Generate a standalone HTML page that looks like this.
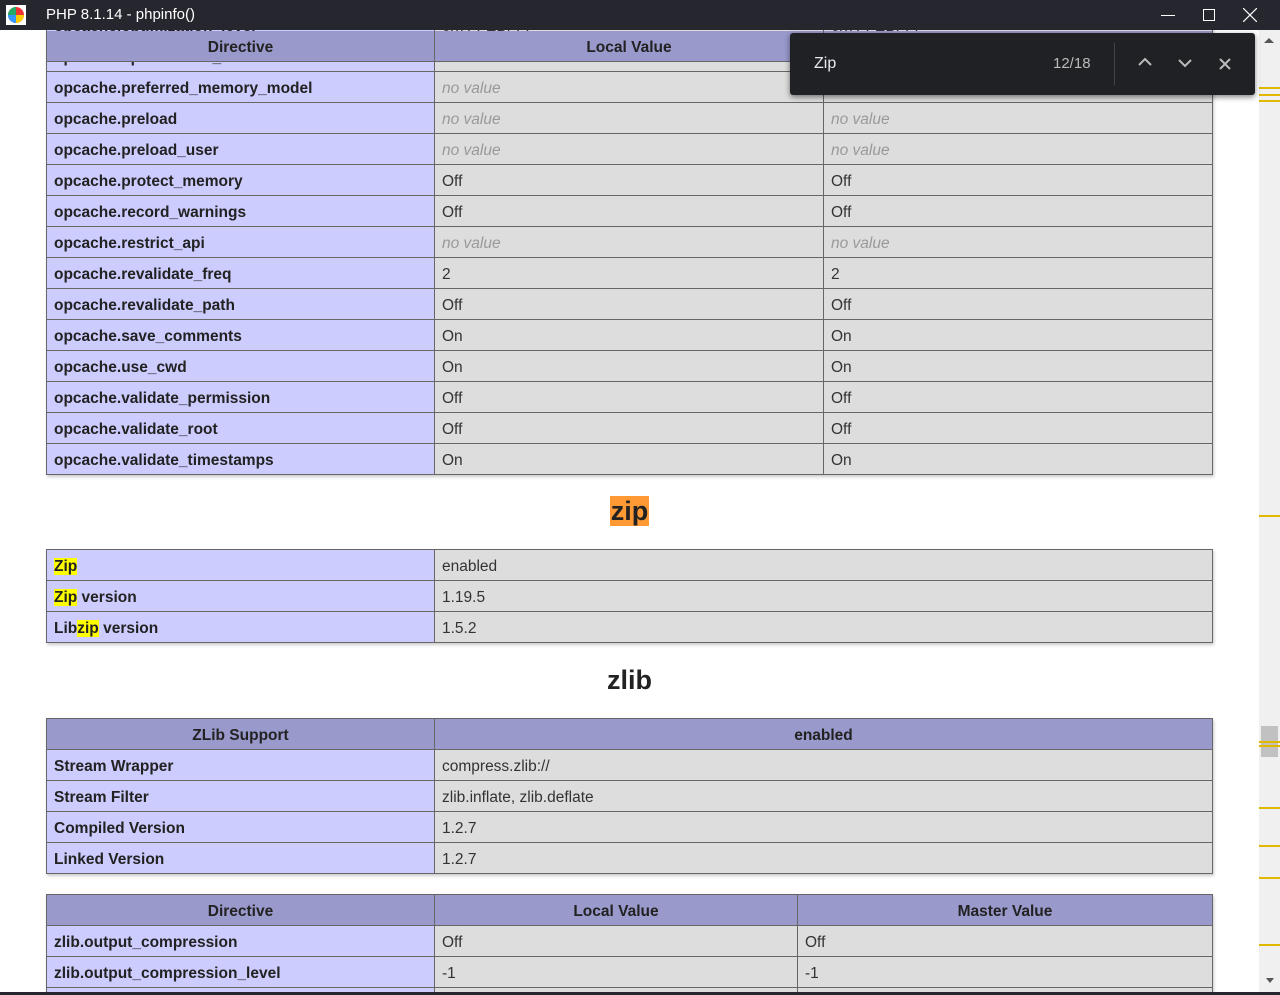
<!DOCTYPE html>
<html style="overflow:hidden;height:995px"><head><meta charset="utf-8"><style>
*{margin:0;padding:0;box-sizing:border-box}
body{width:1280px;height:995px;overflow:hidden;background:#fff;font-family:"Liberation Sans",sans-serif;color:#222}
#w{position:absolute;left:0;top:0;width:1280px;height:995px;overflow:hidden}
.tb{position:absolute;left:0;top:0;width:1280px;height:30px;background:#26262e;color:#fff;font-size:15px}
.tb .t{position:absolute;left:46px;top:6px}
table{position:absolute;left:46px;width:1167px;border-collapse:collapse;font-size:15.5px;box-shadow:1px 2px 3px #ccc}
td,th{border:1px solid #666;height:31px;padding:4px 7px 0;vertical-align:middle;white-space:nowrap}
td.e{background:#ccf;font-weight:bold;color:#222}
td.v{background:#ddd;color:#333}
th{background:#99c;font-weight:bold;text-align:center;color:#222}
i{color:#999}
.hl{background:#ff0}
h2{position:absolute;left:46px;width:1167px;text-align:center;font-size:27px;font-weight:bold;color:#222}
.sb{position:absolute;left:1259px;top:30px;width:21px;height:965px;background:#f0f0f0}
.mk{position:absolute;left:1259px;width:21px;height:2px;background:#e0b800}
.find{position:absolute;left:790px;top:33px;width:465px;height:62px;background:#202124;border-radius:3px;box-shadow:0 2px 6px rgba(0,0,0,.5);color:#e8eaed}
</style></head><body><div id="w">
<table style="top:9px">
<colgroup><col style="width:388px"><col style="width:389px"><col></colgroup>
<tr><td class="e">opcache.optimization_level</td><td class="v">0x7FFEBFFF</td><td class="v">0x7FFEBFFF</td></tr>
<tr><td class="e">opcache.optimization_level</td><td class="v">0x7FFEBFFF</td><td class="v">0x7FFEBFFF</td></tr>
<tr><td class="e">opcache.preferred_memory_model</td><td class="v"><i>no value</i></td><td class="v"><i>no value</i></td></tr>
<tr><td class="e">opcache.preload</td><td class="v"><i>no value</i></td><td class="v"><i>no value</i></td></tr>
<tr><td class="e">opcache.preload_user</td><td class="v"><i>no value</i></td><td class="v"><i>no value</i></td></tr>
<tr><td class="e">opcache.protect_memory</td><td class="v">Off</td><td class="v">Off</td></tr>
<tr><td class="e">opcache.record_warnings</td><td class="v">Off</td><td class="v">Off</td></tr>
<tr><td class="e">opcache.restrict_api</td><td class="v"><i>no value</i></td><td class="v"><i>no value</i></td></tr>
<tr><td class="e">opcache.revalidate_freq</td><td class="v">2</td><td class="v">2</td></tr>
<tr><td class="e">opcache.revalidate_path</td><td class="v">Off</td><td class="v">Off</td></tr>
<tr><td class="e">opcache.save_comments</td><td class="v">On</td><td class="v">On</td></tr>
<tr><td class="e">opcache.use_cwd</td><td class="v">On</td><td class="v">On</td></tr>
<tr><td class="e">opcache.validate_permission</td><td class="v">Off</td><td class="v">Off</td></tr>
<tr><td class="e">opcache.validate_root</td><td class="v">Off</td><td class="v">Off</td></tr>
<tr><td class="e">opcache.validate_timestamps</td><td class="v">On</td><td class="v">On</td></tr>
</table>
<table style="top:31px;box-shadow:none">
<colgroup><col style="width:388px"><col style="width:389px"><col></colgroup>
<tr><th style="height:30px;border-top:none">Directive</th><th style="height:30px;border-top:none">Local Value</th><th style="height:30px;border-top:none">Master Value</th></tr>
</table>
<h2 style="top:496px"><span style="background:#f93;padding:0 1px">zip</span></h2>
<table style="top:549px">
<colgroup><col style="width:388px"><col></colgroup>
<tr><td class="e"><span class="hl">Zip</span></td><td class="v">enabled</td></tr>
<tr><td class="e"><span class="hl">Zip</span> version</td><td class="v">1.19.5</td></tr>
<tr><td class="e">Lib<span class="hl">zip</span> version</td><td class="v">1.5.2</td></tr>
</table>
<h2 style="top:665px">zlib</h2>
<table style="top:718px">
<colgroup><col style="width:388px"><col></colgroup>
<tr><th>ZLib Support</th><th>enabled</th></tr>
<tr><td class="e">Stream Wrapper</td><td class="v">compress.zlib://</td></tr>
<tr><td class="e">Stream Filter</td><td class="v">zlib.inflate, zlib.deflate</td></tr>
<tr><td class="e">Compiled Version</td><td class="v">1.2.7</td></tr>
<tr><td class="e">Linked Version</td><td class="v">1.2.7</td></tr>
</table>
<table style="top:894px">
<colgroup><col style="width:388px"><col style="width:363px"><col></colgroup>
<tr><th>Directive</th><th>Local Value</th><th>Master Value</th></tr>
<tr><td class="e">zlib.output_compression</td><td class="v">Off</td><td class="v">Off</td></tr>
<tr><td class="e">zlib.output_compression_level</td><td class="v">-1</td><td class="v">-1</td></tr>
<tr><td class="e">zlib.output_handler</td><td class="v"><i>no value</i></td><td class="v"><i>no value</i></td></tr>
</table>
<div class="sb"></div>
<div style="position:absolute;left:1264px;top:38px;width:0;height:0;border-left:5px solid transparent;border-right:5px solid transparent;border-bottom:5px solid #555"></div>
<div style="position:absolute;left:1266px;top:978px;width:0;height:0;border-left:4px solid transparent;border-right:4px solid transparent;border-top:5px solid #555"></div>
<div style="position:absolute;left:1261px;top:726px;width:17px;height:31px;background:#c1c1c1"></div>
<div class="mk" style="top:87px"></div><div class="mk" style="top:94px"></div><div class="mk" style="top:100px"></div>
<div class="mk" style="top:515px"></div><div class="mk" style="top:741px"></div><div class="mk" style="top:745px"></div>
<div class="mk" style="top:807px"></div><div class="mk" style="top:845px"></div><div class="mk" style="top:877px"></div><div class="mk" style="top:944px"></div>
<div style="position:absolute;left:0;top:992px;width:1280px;height:3px;background:#26262e"></div>
<div class="tb">
<svg style="position:absolute;left:6px;top:5px" width="20" height="20" viewBox="0 0 20 20"><rect width="20" height="20" fill="#fff"/><circle cx="10" cy="10" r="8" fill="#e33"/><path d="M10 10L2 10A8 8 0 0 1 10 2Z" fill="#2a6"/><path d="M10 10L10 18A8 8 0 0 1 2 10Z" fill="#39f"/><path d="M10 10L18 10A8 8 0 0 1 10 18Z" fill="#fc0"/></svg>
<span class="t">PHP 8.1.14 - phpinfo()</span>
<div style="position:absolute;left:1161px;top:15px;width:14px;height:1px;background:#fff"></div>
<div style="position:absolute;left:1203px;top:9px;width:12px;height:12px;border:1px solid #fff"></div>
<svg style="position:absolute;left:1243px;top:8px" width="14" height="14"><path d="M0 0L14 14M14 0L0 14" stroke="#fff" stroke-width="1.2"/></svg>
</div>
<div class="find">
<span style="position:absolute;left:24px;top:22px;font-size:16px">Zip</span>
<span style="position:absolute;left:263px;top:22px;font-size:15px;color:#bbb">12/18</span>
<div style="position:absolute;left:324px;top:10px;width:1px;height:42px;background:#444"></div>
<svg style="position:absolute;left:348px;top:24px" width="14" height="10"><path d="M1 8L7 2L13 8" fill="none" stroke="#bbb" stroke-width="2"/></svg>
<svg style="position:absolute;left:388px;top:25px" width="14" height="10"><path d="M1 2L7 8L13 2" fill="none" stroke="#bbb" stroke-width="2"/></svg>
<svg style="position:absolute;left:429px;top:25px" width="12" height="12"><path d="M1 1L11 11M11 1L1 11" stroke="#bbb" stroke-width="2"/></svg>
</div>
</div></body></html>
